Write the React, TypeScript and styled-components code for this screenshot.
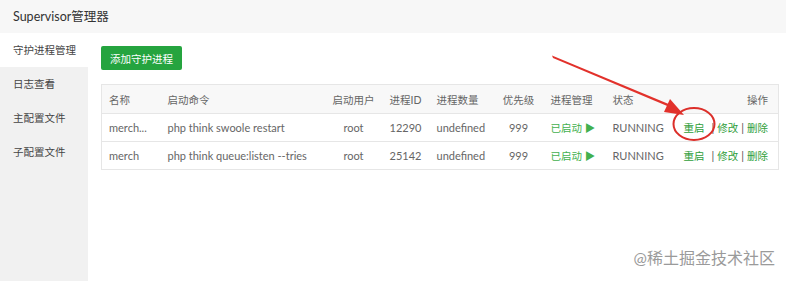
import styled, { createGlobalStyle } from "styled-components";

const GlobalStyle = createGlobalStyle`
    body {
        margin: 0;
        background: #fff;
        font-family: Lato, "Noto Sans CJK SC", sans-serif;
    }
`;

type Col = { width: number; align: "left" | "center" | "right"; pad?: number };

const columns: Col[] = [
    { width: 59, align: "left" },
    { width: 165, align: "left" },
    { width: 56, align: "center" },
    { width: 48, align: "center" },
    { width: 66, align: "left" },
    { width: 46, align: "center" },
    { width: 64, align: "left", pad: 9 },
    { width: 63, align: "left" },
    { width: 110, align: "right" },
];

const headers = ["名称", "启动命令", "启动用户", "进程ID", "进程数量", "优先级", "进程管理", "状态", "操作"];

const rows = [
    { name: "merch...", cmd: "php think swoole restart", user: "root", pid: "12290", num: "undefined", prio: "999" },
    { name: "merch", cmd: "php think queue:listen --tries", user: "root", pid: "25142", num: "undefined", prio: "999" },
];

const navItems = ["守护进程管理", "日志查看", "主配置文件", "子配置文件"];

export default function App() {
    return (
        <Page>
            <GlobalStyle />
            <TopBar>Supervisor管理器</TopBar>
            <Body>
                <Sidebar>
                    {navItems.map((item, i) => (
                        <NavItem key={item} $active={i === 0}>
                            {item}
                        </NavItem>
                    ))}
                </Sidebar>
                <Main>
                    <AddButton>添加守护进程</AddButton>
                    <Table>
                        <colgroup>
                            {columns.map((c, i) => (
                                <col key={i} style={{ width: c.width }} />
                            ))}
                        </colgroup>
                        <thead>
                            <HeadRow>
                                {headers.map((h, i) => (
                                    <Th key={h} $align={columns[i].align} $pad={columns[i].pad}>
                                        {h}
                                    </Th>
                                ))}
                            </HeadRow>
                        </thead>
                        <tbody>
                            {rows.map((r) => (
                                <Row key={r.pid}>
                                    <Td $align="left">{r.name}</Td>
                                    <Td $align="left">{r.cmd}</Td>
                                    <Td $align="center">{r.user}</Td>
                                    <Td $align="center">{r.pid}</Td>
                                    <Td $align="left">{r.num}</Td>
                                    <Td $align="center">{r.prio}</Td>
                                    <Td $align="left" $pad={9}>
                                        <Started>已启动 ▶</Started>
                                    </Td>
                                    <Td $align="left">RUNNING</Td>
                                    <Td $align="right">
                                        <Action>重启</Action>
                                        <Sep $wide>|</Sep>
                                        <Action>修改</Action>
                                        <Sep>|</Sep>
                                        <Action>删除</Action>
                                    </Td>
                                </Row>
                            ))}
                        </tbody>
                    </Table>
                </Main>
            </Body>
            <Annotation width="786" height="281" viewBox="0 0 786 281">
                <polygon points="552,55.5 553,58 672,108 671,105" fill="#e2312b" />
                <polygon points="670,99 684,115 664,112" fill="#e2312b" />
                <ellipse cx="694" cy="124" rx="20.5" ry="16" fill="none" stroke="#dc2f2a" strokeWidth="2" />
            </Annotation>
            <Watermark>@稀土掘金技术社区</Watermark>
        </Page>
    );
}

const Page = styled.div`
    position: relative;
    width: 786px;
    height: 281px;
    overflow: hidden;
    background: #fff;
`;

const TopBar = styled.div`
    height: 33px;
    line-height: 33px;
    padding-left: 13px;
    background: #f7f7f7;
    color: #333;
    font-size: 12.5px;
`;

const Body = styled.div`
    display: flex;
    height: 248px;
`;

const Sidebar = styled.div`
    width: 88px;
    flex-shrink: 0;
    background: #f1f1f1;
`;

const NavItem = styled.div<{ $active?: boolean }>`
    height: 34px;
    line-height: 34px;
    padding-left: 13px;
    font-size: 10.5px;
    color: #444;
    background: ${(p) => (p.$active ? "#fff" : "transparent")};
`;

const Main = styled.div`
    flex: 1;
    padding: 13px 8px 0 13px;
`;

const AddButton = styled.button`
    display: block;
    height: 24px;
    padding: 0 9px;
    border: none;
    border-radius: 2px;
    background: #25a43f;
    color: #fff;
    font-family: inherit;
    font-size: 10.5px;
`;

const Table = styled.table`
    margin-top: 14px;
    width: 677px;
    table-layout: fixed;
    border-collapse: collapse;
    border: 1px solid #e6e6e6;
    font-size: 11px;
    color: #666;
`;

const HeadRow = styled.tr`
    height: 29px;
    background: #f8f8f8;
`;

const Row = styled.tr`
    height: 28px;
    border-top: 1px solid #e6e6e6;
`;

const Th = styled.th<{ $align: string; $pad?: number }>`
    font-weight: normal;
    font-size: 10.5px;
    text-align: ${(p) => p.$align};
    padding: 0 ${(p) => (p.$align === "right" ? 10 : 0)}px 0
        ${(p) => (p.$align === "left" ? p.$pad ?? 7 : 0)}px;
    white-space: nowrap;
`;

const Td = styled.td<{ $align: string; $pad?: number }>`
    text-align: ${(p) => p.$align};
    padding: 0 ${(p) => (p.$align === "right" ? 10 : 0)}px 0
        ${(p) => (p.$align === "left" ? p.$pad ?? 7 : 0)}px;
    white-space: nowrap;
`;

const Started = styled.span`
    color: #43b04e;
    font-size: 10.5px;
`;

const Action = styled.span`
    color: #2f9e3a;
    font-size: 10.5px;
`;

const Sep = styled.span<{ $wide?: boolean }>`
    color: #555;
    margin: 0 3px 0 ${(p) => (p.$wide ? 7 : 3)}px;
`;

const Annotation = styled.svg`
    position: absolute;
    left: 0;
    top: 0;
    pointer-events: none;
`;

const Watermark = styled.div`
    position: absolute;
    right: 11px;
    bottom: 12px;
    font-size: 16px;
    color: #9a9a9a;
`;
